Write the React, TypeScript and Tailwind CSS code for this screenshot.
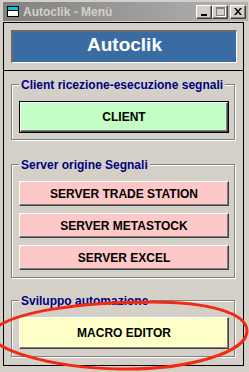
import type { ReactNode } from 'react';

const sans = "font-['Liberation_Sans',Arial,sans-serif]";

function GroupBox({ label, className, children }: { label: string; className: string; children: ReactNode }) {
  return (
    <div
      className={`relative ml-[7px] w-[224px] border border-[#808080] shadow-[inset_1px_1px_0_#ffffff,1px_1px_0_#ffffff] pl-[7px] ${className}`}
    >
      <span className="absolute left-[7px] top-[-7px] bg-[#d4d0c8] px-[2px] text-[12px] font-bold leading-[14px] text-[#000080]">
        {label}
      </span>
      {children}
    </div>
  );
}

function WinButton({ label, color, tall, isDefault }: { label: string; color: string; tall?: boolean; isDefault?: boolean }) {
  return (
    <div className={`w-[210px] ${tall ? 'h-[32px]' : 'h-[25px]'} ${isDefault ? 'border border-black' : ''}`}>
      <div
        className={`flex h-full w-full items-center justify-center border-t border-l border-t-white border-l-white border-r border-b border-r-[#404040] border-b-[#404040] shadow-[inset_-1px_-1px_0_#808080] text-[12px] font-bold text-black ${color}`}
      >
        {label}
      </div>
    </div>
  );
}

function TitleButton({ children, gapRight }: { children: ReactNode; gapRight?: boolean }) {
  return (
    <div
      className={`flex h-[14px] w-[16px] items-center justify-center bg-[#d4d0c8] border-t border-l border-t-white border-l-white border-r border-b border-r-[#404040] border-b-[#404040] shadow-[inset_-1px_-1px_0_#808080] ${gapRight ? 'mr-[2px]' : ''}`}
    >
      {children}
    </div>
  );
}

export default function App() {
  return (
    <div className={`relative h-[372px] w-[249px] overflow-hidden bg-[#d4d0c8] pl-[3px] pt-[2px] ${sans}`}>
      {/* title bar */}
      <div className="flex h-[19px] w-[245px] items-center bg-gradient-to-r from-[#808080] to-[#b4b4b4] pl-[4px] pr-[2px]">
        <svg width="12" height="11" viewBox="0 0 12 11" className="mr-[4px]">
          <rect x="0.5" y="0.5" width="11" height="10" fill="#ffffff" stroke="#000000" />
          <rect x="1" y="1" width="10" height="3" fill="#00c8e0" />
          <line x1="1" y1="4.5" x2="11" y2="4.5" stroke="#000000" />
        </svg>
        <span className="text-[12px] font-bold leading-none text-[#d4d0c8]">Autoclik - Menù</span>
        <div className="ml-auto flex items-center">
          <TitleButton>
            <div className="mt-[6px] h-[2px] w-[6px] bg-black" />
          </TitleButton>
          <TitleButton gapRight>
            <div className="h-[9px] w-[9px] border border-t-2 border-[#808080] shadow-[1px_1px_0_#ffffff]" />
          </TitleButton>
          <TitleButton>
            <svg width="8" height="7" viewBox="0 0 8 7">
              <path d="M0 0 L2 0 L4 2.5 L6 0 L8 0 L5 3.5 L8 7 L6 7 L4 4.5 L2 7 L0 7 L3 3.5 Z" fill="#000000" />
            </svg>
          </TitleButton>
        </div>
      </div>

      {/* client area */}
      <div className="mt-[1px] flex h-[344px] w-[241px] flex-col border border-black">
        <div className="border-b border-black pb-[7px] pt-[7px]">
          <div className="ml-[7px] flex h-[33px] w-[226px] items-center justify-center border-t-2 border-l-2 border-t-[#6a6a6a] border-l-[#6a6a6a] border-b border-r border-b-white border-r-white bg-[#3a6ca4] pb-[3px] text-[19px] font-bold text-white">
            Autoclik
          </div>
        </div>

        <div className="flex flex-col">
          <GroupBox label="Client ricezione-esecuzione segnali" className="mt-[13px] pb-[6px] pt-[16px]">
            <WinButton label="CLIENT" color="bg-[#c4fec4]" tall isDefault />
          </GroupBox>

          <GroupBox label="Server origine Segnali" className="mt-[24px] flex flex-col gap-[7px] pb-[7px] pt-[16px]">
            <WinButton label="SERVER TRADE STATION" color="bg-[#ffc8c8]" />
            <WinButton label="SERVER METASTOCK" color="bg-[#ffc8c8]" />
            <WinButton label="SERVER EXCEL" color="bg-[#ffc8c8]" />
          </GroupBox>

          <GroupBox label="Sviluppo automazione" className="mt-[22px] pb-[7px] pt-[16px]">
            <WinButton label="MACRO EDITOR" color="bg-[#ffffc8]" tall />
          </GroupBox>
        </div>
      </div>

      {/* red hand-drawn ellipse */}
      <svg
        className="pointer-events-none absolute left-0 top-0"
        width="249"
        height="372"
        viewBox="0 0 249 372"
      >
        <path
          d="M247 331 C247 312 205 302 152 302 C85 302 8 311 -8 332 C-15 348 50 368 120 369 C190 370 247 352 247 331 Z"
          fill="none"
          stroke="#f22a12"
          strokeWidth="3"
        />
      </svg>
    </div>
  );
}
